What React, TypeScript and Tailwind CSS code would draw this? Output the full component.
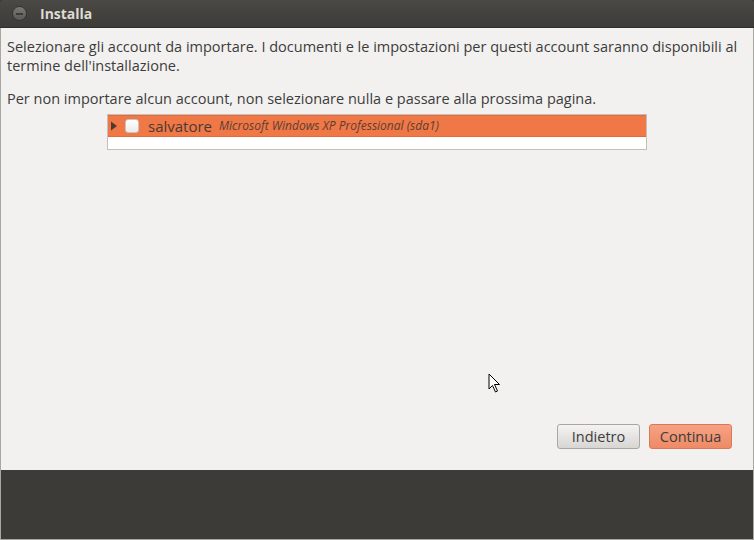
const App = () => {
  return (
    <div
      className="w-[754px] h-[540px] flex flex-col bg-[#3c3b37] overflow-hidden"
      style={{ fontFamily: '"Open Sans", "DejaVu Sans", sans-serif' }}
    >
      {/* title bar */}
      <div className="h-[28px] flex items-center bg-gradient-to-b from-[#4a4945] to-[#3c3b37] border-b border-[#2f2e2b] rounded-t-[4px]">
        <div className="ml-[12px] w-[15px] h-[15px] rounded-full bg-gradient-to-b from-[#7a7975] to-[#5a5955] border border-[#34332f] flex items-center justify-center">
          <div className="w-[7px] h-[2px] bg-[#3c3b37]" />
        </div>
        <span className="ml-[13px] text-[14px] font-bold text-[#dfdbd2]">Installa</span>
      </div>

      {/* body */}
      <div className="h-[442px] bg-[#f2f1f0] border-x border-[#a8a7a3] flex flex-col px-[6px] pt-[9px] text-[#3c3c3c]">
        <p className="text-[14.5px] leading-[19px] whitespace-nowrap">
          Selezionare gli account da importare. I documenti e le impostazioni per questi account saranno disponibili al
          <br />
          termine dell'installazione.
        </p>
        <p className="mt-[14px] text-[14.5px] leading-[19px] whitespace-nowrap">
          Per non importare alcun account, non selezionare nulla e passare alla prossima pagina.
        </p>

        <div className="ml-[100px] mt-[6px] w-[540px] h-[36px] border border-[#c3c0bb] bg-white">
          <div className="h-[22px] bg-[#f07746] border-y border-[#e06b3b] flex items-center">
            <svg width="9" height="12" viewBox="0 0 9 12" className="ml-[2px]">
              <path d="M1 1.5 L7 6 L1 10.5 Z" fill="#4a3a33" />
            </svg>
            <div className="ml-[6px] w-[14px] h-[14px] rounded-[3px] border border-[#c9c3bd] bg-gradient-to-b from-white to-[#ecebe9]" />
            <span className="ml-[9px] text-[15px] text-[#4a3a33]">salvatore</span>
            <span className="ml-[7px] text-[12px] italic text-[#5a3f32]">Microsoft Windows XP Professional (sda1)</span>
          </div>
        </div>

        <div className="flex-1 relative">
          <svg width="14" height="22" viewBox="0 0 14 22" className="absolute left-[481px] top-[223px]">
            <path d="M1 1 L1 16 L4.5 12.5 L7.5 19 L9.5 18 L6.5 11.5 L11.5 11.5 Z" fill="#fff" stroke="#000" strokeWidth="1" />
          </svg>
        </div>

        <div className="flex justify-end gap-[9px] pr-[15px] pb-[21px]">
          <button className="w-[83px] h-[25px] rounded-[3px] border border-[#a9a7a3] bg-gradient-to-b from-[#f4f3f2] to-[#d8d6d3] text-[14.5px] text-[#3c3c3c] flex items-center justify-center">
            Indietro
          </button>
          <button className="w-[83px] h-[25px] rounded-[3px] border border-[#d97a57] bg-gradient-to-b from-[#f6a283] to-[#ee8a66] text-[14.5px] text-[#3c3c3c] flex items-center justify-center">
            Continua
          </button>
        </div>
      </div>

      {/* bottom bar */}
      <div className="flex-1 bg-[#3c3b37] border-x border-b border-[#a8a7a3]" />
    </div>
  );
};

export default App;
